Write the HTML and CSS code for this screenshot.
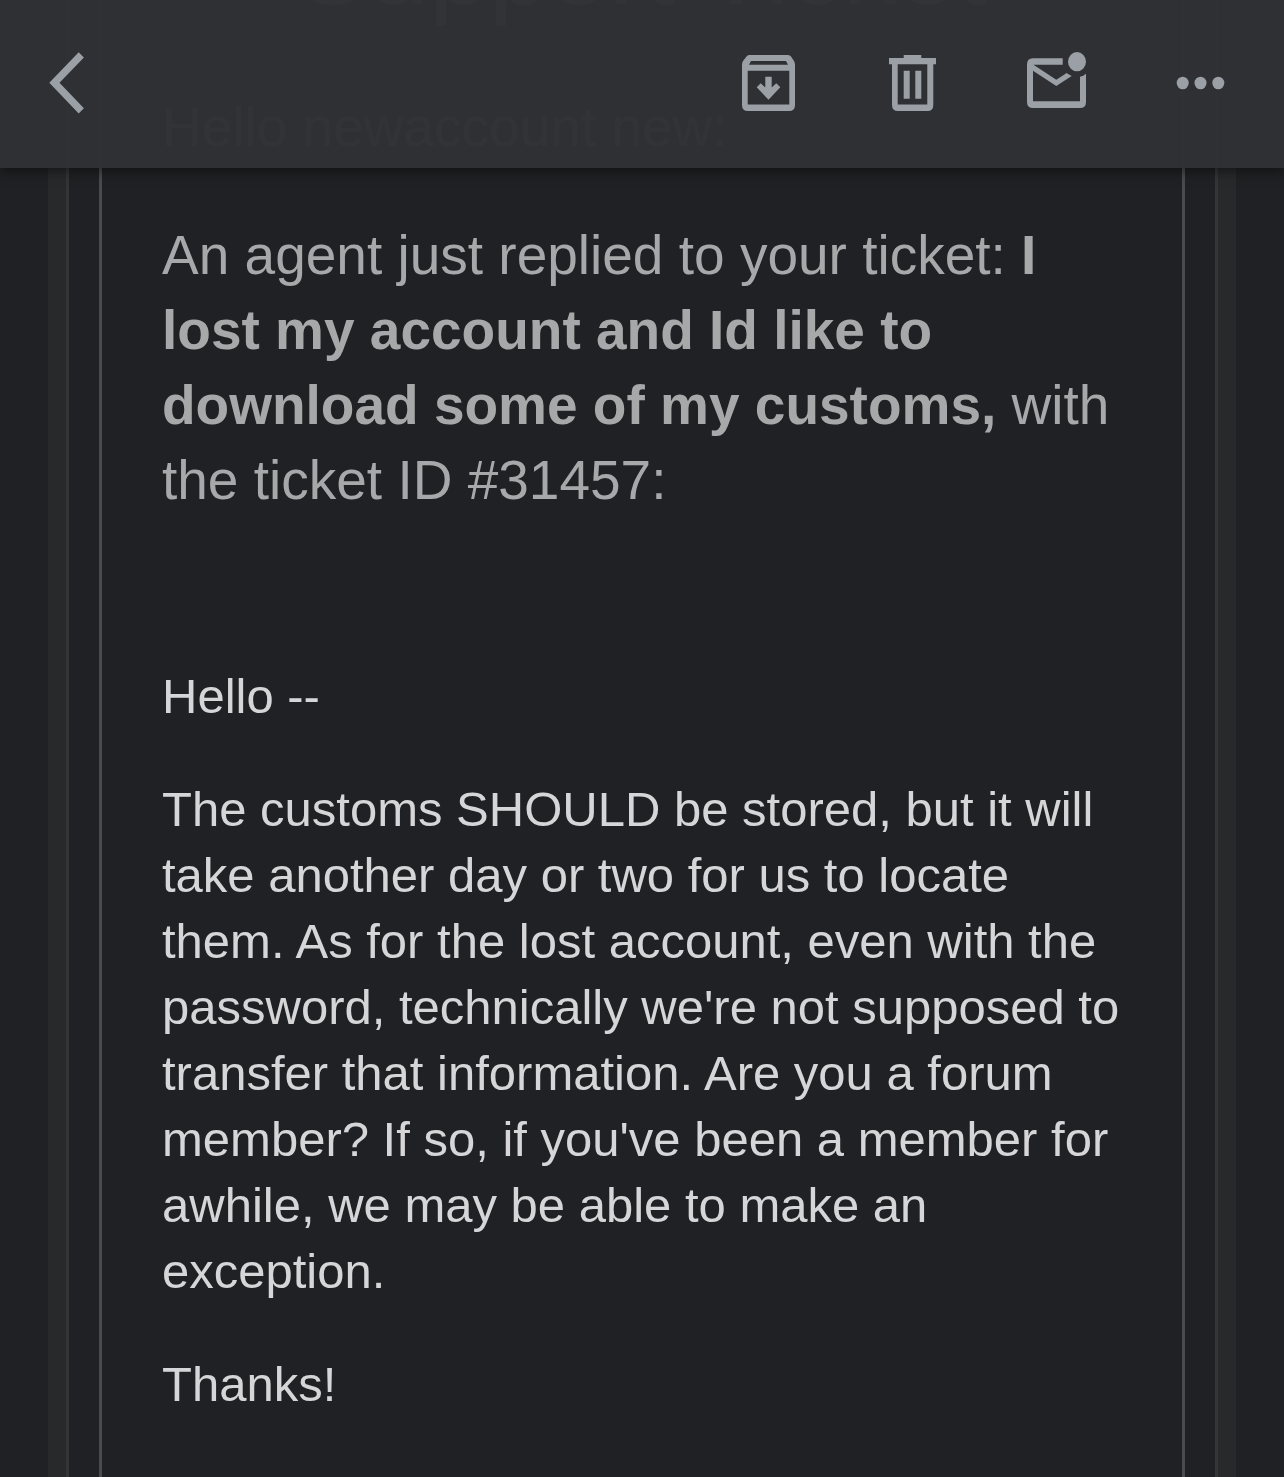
FILE: index.html
```html
<!DOCTYPE html>
<html lang="en">
<head>
    <meta charset="UTF-8">
    <meta name="viewport" content="width=device-width, initial-scale=1.0">
    <title>Support Ticket</title>
    <link rel="stylesheet" href="styles.css">
</head>
<body>
    <header class="toolbar">
        <button class="icon-button back" type="button" aria-label="Back">
            <svg viewBox="0 0 72 72"><path d="M30.7 4.3 35.9 9.5 11.5 34.8 35.9 60.3 30.7 65.6 1.3 34.8Z"/></svg>
        </button>
        <button class="icon-button" type="button" aria-label="Archive">
            <svg viewBox="0 0 72 72"><path fill-rule="evenodd" d="M17 7H56Q58 7 59 8.500L62 13Q63 14.500 63 16.500V57Q63 63 57 63H16Q10 63 10 57V16.500Q10 14.500 11 13L14.500 8.500Q15.500 7 17 7ZM19 13 17 16.700H56L54 13ZM15.700 22.700V56.500H57.300V22.700ZM33.300 28.700H39.700V39.500L44.300 35.300 48.300 39.300 36.500 51.800 24.700 39.300 28.700 35.300 33.300 39.500Z"/></svg>
        </button>
        <button class="icon-button" type="button" aria-label="Delete">
            <svg viewBox="0 0 72 72"><path fill-rule="evenodd" d="M27.700 7H45.300V10H60V16.300H57.300V57Q57.300 63 51.500 63H22Q16 63 16 57V16.300H13V10H27.700ZM21.700 16.300V56.500H51.300V16.300ZM27.700 22.700H33.700V50.700H27.700ZM39.300 22.700H45.300V50.700H39.300Z"/></svg>
        </button>
        <button class="icon-button" type="button" aria-label="Mark as unread">
            <svg viewBox="0 0 72 72"><path d="M42.700 10.300H13Q7 10.300 7 16.500V54Q7 60 13 60H60Q66 60 66 54V25.700Q63.500 28 60 28.700V53.300H13V22.700L36.300 38 51.700 28Q48.700 26.700 46.700 25L36.300 31.700 13.500 16.700H42.700Z"/><ellipse cx="57" cy="13.700" rx="9" ry="9.600"/></svg>
        </button>
        <button class="icon-button" type="button" aria-label="More">
            <svg viewBox="0 0 72 72"><ellipse cx="18.700" cy="35" rx="6" ry="6.300"/><ellipse cx="36.500" cy="35" rx="6" ry="6.300"/><ellipse cx="54.300" cy="35" rx="6" ry="6.300"/></svg>
        </button>
    </header>
    <main class="mail">
        <div class="mail-frame">
            <article class="mail-card">
                <h1>Support Ticket</h1>
                <div class="notice">
                    <p>Hello newaccount new:</p>
                    <p>An agent just replied to your ticket: <strong>I lost my account and Id like to download some of my customs,</strong> with the ticket ID #31457:</p>
                </div>
                <div class="reply">
                    <p>Hello --</p>
                    <p>The customs SHOULD be stored, but it will take another day or two for us to locate them. As for the lost account, even with the password, technically we're not supposed to transfer that information. Are you a forum member? If so, if you've been a member for awhile, we may be able to make an exception.</p>
                    <p>Thanks!</p>
                </div>
            </article>
        </div>
    </main>
</body>
</html>
```
FILE: styles.css
```css
*{
    padding: 0;
    margin: 0;
    box-sizing: border-box;
}
body{
    background: #202124;
    font-family: "Liberation Sans", Arial, Helvetica, sans-serif;
}
.toolbar{
    position: fixed;
    top: 0;
    left: 0;
    right: 0;
    z-index: 1;
    display: flex;
    align-items: center;
    gap: 72px;
    height: 168px;
    padding: 0 48px;
    background: rgba(48, 49, 52, 0.98);
    box-shadow: 0 3px 12px 0 rgba(0, 0, 0, 0.5);
}
.icon-button{
    width: 72px;
    height: 72px;
    border: none;
    background: none;
    cursor: pointer;
}
.icon-button svg{
    display: block;
    width: 72px;
    height: 72px;
    fill: #9aa0a6;
}
.back{
    margin-right: auto;
}
/* the message opens scrolled, its title sits behind the toolbar */
.mail{
    display: flex;
    margin-top: -108px;
    min-height: calc(100vh + 108px);
    padding: 0 48px;
}
.mail-frame{
    display: flex;
    flex: 1;
    padding: 0 18px;
    background: #28292a;
}
.mail-frame::before,
.mail-frame::after{
    content: "";
    width: 30px;
    border-left: 3px solid #343537;
    background: #202124;
}
.mail-frame::after{
    border-left: none;
    border-right: 3px solid #343537;
}
.mail-card{
    flex: 1;
    padding: 0 60px 48px;
    border: solid #4a4b4e;
    border-width: 0 3px;
    background: #202124;
}
h1{
    font-size: 108px;
    font-weight: normal;
    line-height: 150px;
    text-align: center;
    color: #a7a8a9;
}
.notice{
    display: flex;
    flex-direction: column;
    gap: 53px;
    padding-top: 48px;
    font-size: 55px;
    line-height: 75px;
    color: #a7a8a9;
}
.reply{
    display: flex;
    flex-direction: column;
    gap: 47px;
    padding-top: 145px;
    font-size: 49px;
    line-height: 66px;
    color: #d6d6d8;
}
```
